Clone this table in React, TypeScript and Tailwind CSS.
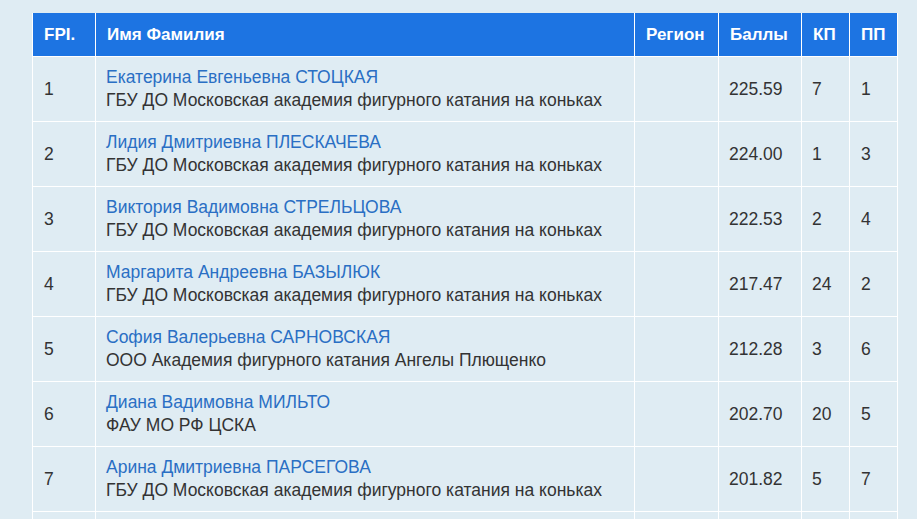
import React from "react";

const rows = [
  ["1", "Екатерина Евгеньевна СТОЦКАЯ", "ГБУ ДО Московская академия фигурного катания на коньках", "225.59", "7", "1"],
  ["2", "Лидия Дмитриевна ПЛЕСКАЧЕВА", "ГБУ ДО Московская академия фигурного катания на коньках", "224.00", "1", "3"],
  ["3", "Виктория Вадимовна СТРЕЛЬЦОВА", "ГБУ ДО Московская академия фигурного катания на коньках", "222.53", "2", "4"],
  ["4", "Маргарита Андреевна БАЗЫЛЮК", "ГБУ ДО Московская академия фигурного катания на коньках", "217.47", "24", "2"],
  ["5", "София Валерьевна САРНОВСКАЯ", "ООО Академия фигурного катания Ангелы Плющенко", "212.28", "3", "6"],
  ["6", "Диана Вадимовна МИЛЬТО", "ФАУ МО РФ ЦСКА", "202.70", "20", "5"],
  ["7", "Арина Дмитриевна ПАРСЕГОВА", "ГБУ ДО Московская академия фигурного катания на коньках", "201.82", "5", "7"],
];

export default function App() {
  return (
    <div
      className="w-[917px] h-[519px] overflow-hidden bg-[#dfecf3] pt-[13px] pl-[32px]"
      style={{ fontFamily: '"Liberation Sans", Arial, sans-serif' }}
    >
      <div className="grid w-[866px] grid-cols-[62px_538px_83px_82px_47px_47px] gap-px bg-white px-px pb-px text-[17.5px] text-[#333333]">
        {["FPI.", "Имя Фамилия", "Регион", "Баллы", "КП", "ПП"].map((h) => (
          <div
            key={h}
            className="flex h-[43px] items-center bg-[#1d74e2] px-[11px] text-[17px] font-bold text-white"
          >
            {h}
          </div>
        ))}
        {rows.map((r) => (
          <React.Fragment key={r[0]}>
            <div className="flex h-[64px] items-center bg-[#dfecf3] px-[11px]">{r[0]}</div>
            <div className="flex h-[64px] flex-col justify-center bg-[#dfecf3] px-[10px] leading-[23px]">
              <span className="text-[#2a6fc4]">{r[1]}</span>
              <span>{r[2]}</span>
            </div>
            <div className="h-[64px] bg-[#dfecf3]" />
            <div className="flex h-[64px] items-center bg-[#dfecf3] px-[10px]">{r[3]}</div>
            <div className="flex h-[64px] items-center bg-[#dfecf3] px-[10px]">{r[4]}</div>
            <div className="flex h-[64px] items-center bg-[#dfecf3] px-[11px]">{r[5]}</div>
          </React.Fragment>
        ))}
        {[0, 1, 2, 3, 4, 5].map((i) => (
          <div key={i} className="h-[64px] bg-[#dfecf3]" />
        ))}
      </div>
    </div>
  );
}
